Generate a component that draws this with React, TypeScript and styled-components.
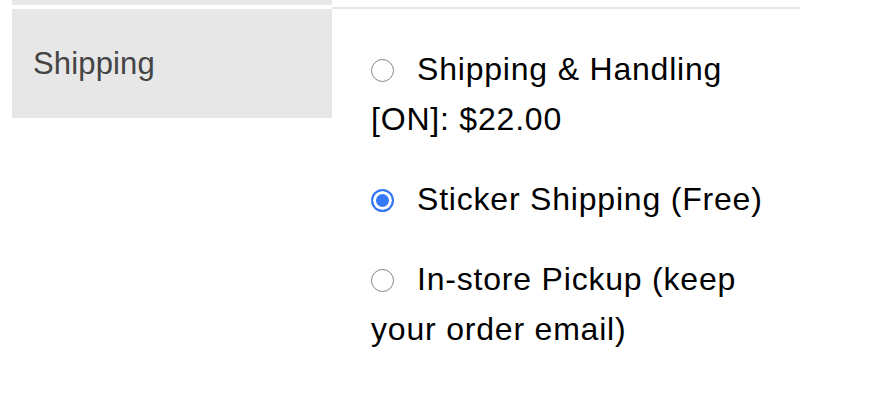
import { useState } from "react";
import styled, { createGlobalStyle } from "styled-components";

const GlobalStyle = createGlobalStyle`
  html, body {
    margin: 0;
    padding: 0;
    background: #ffffff;
  }
  body {
    font-family: "Liberation Sans", Arial, Helvetica, sans-serif;
  }
`;

const Table = styled.div`
  width: 788px;
  margin-left: 12px;
  display: grid;
  grid-template-columns: 320px 1fr;
  align-items: start;
`;

const PrevLabel = styled.div`
  height: 5px;
  background: #e7e7e7;
`;

const PrevValue = styled.div`
  height: 7px;
  border-bottom: 2px solid #e6e6e6;
`;

const LabelCell = styled.div`
  box-sizing: border-box;
  height: 109px;
  background: #e7e7e7;
  padding: 37px 21px 0;
  color: #444444;
  font-size: 31px;
  line-height: 36px;
  letter-spacing: 0.15px;
`;

const ValueCell = styled.div`
  padding: 35px 10px 0 39px;
  display: flex;
  flex-direction: column;
  gap: 30px;
`;

const Option = styled.label`
  display: block;
  color: #000000;
  font-size: 32px;
  line-height: 50px;
  letter-spacing: 0.8px;
  cursor: pointer;
`;

const Radio = styled.input.attrs({ type: "radio" })`
  appearance: none;
  box-sizing: border-box;
  width: 23px;
  height: 23px;
  margin: 0 23px 0 0;
  border-radius: 50%;
  border: 1.5px solid #858585;
  background: #ffffff;
  vertical-align: -2px;
  cursor: pointer;

  &:checked {
    border: 2px solid #3478f6;
    box-shadow: inset 0 0 0 3px #ffffff;
    background: #3478f6;
  }
`;

const options = [
  { id: "ship", text: "Shipping & Handling [ON]: $22.00" },
  { id: "sticker", text: "Sticker Shipping (Free)" },
  { id: "pickup", text: "In-store Pickup (keep your order email)" },
];

export default function App() {
  const [selected, setSelected] = useState("sticker");

  return (
    <>
      <GlobalStyle />
      <Table>
        <PrevLabel />
        <PrevValue />
        <LabelCell>Shipping</LabelCell>
        <ValueCell>
          {options.map((opt) => (
            <Option key={opt.id}>
              <Radio
                name="shipping"
                checked={selected === opt.id}
                onChange={() => setSelected(opt.id)}
              />
              {opt.text}
            </Option>
          ))}
        </ValueCell>
      </Table>
    </>
  );
}
